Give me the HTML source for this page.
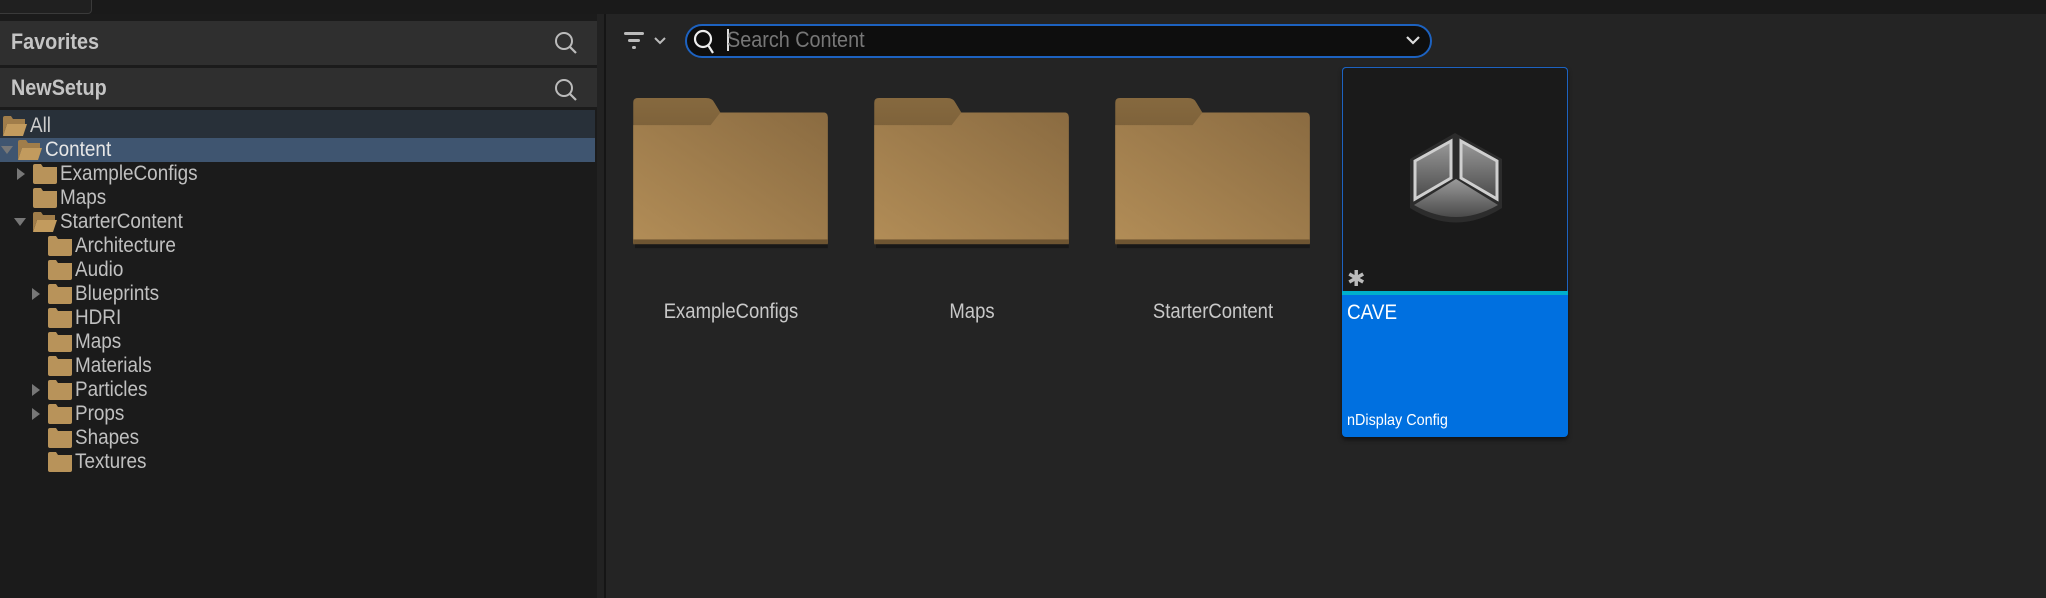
<!DOCTYPE html>
<html><head><meta charset="utf-8"><style>
*{margin:0;padding:0;box-sizing:border-box}
body{width:2046px;height:598px;background:#242424;position:relative;overflow:hidden;font-family:"Liberation Sans",sans-serif;color:#c0c0c0}
.a{position:absolute}
.t{font-size:21px;line-height:24px;white-space:nowrap;transform:scaleX(.9);transform-origin:0 50%}
.arr{position:absolute;width:0;height:0}
.ar{border-top:6px solid transparent;border-bottom:6px solid transparent;border-left:8px solid #777}
.ad{border-left:6px solid transparent;border-right:6px solid transparent;border-top:8px solid #777}
.big{position:absolute;top:98px;width:201px;height:155px}
.lbl{position:absolute;top:300px;width:240px;text-align:center;font-size:21px;color:#c8c8c8;transform:scaleX(.88);transform-origin:50% 50%}
</style></head><body>
<div class="a" style="left:0;top:0;width:2046px;height:14px;background:#1a1a1a"></div>
<div class="a" style="left:-4px;top:-4px;width:96px;height:18px;border:1px solid #3a3a3a;border-radius:4px;background:#202020"></div>
<div class="a" style="left:0;top:14px;width:597px;height:584px;background:#1b1b1b"></div>
<div class="a" style="left:597px;top:14px;width:9px;height:584px;background:#222"></div>
<div class="a" style="left:604px;top:14px;width:2px;height:584px;background:#151515"></div>
<div class="a" style="left:0;top:21px;width:597px;height:44px;background:#2f2f2f"></div>
<div class="a t" style="left:11px;top:30px;font-size:22px;font-weight:bold;color:#c4c4c4">Favorites</div>
<div class="a" style="left:0;top:68px;width:597px;height:39px;background:#2f2f2f"></div>
<div class="a t" style="left:11px;top:76px;font-size:22px;font-weight:bold;color:#c4c4c4">NewSetup</div>
<svg class="a" style="left:553px;top:30px" width="26" height="26" viewBox="0 0 26 26"><circle cx="11" cy="11" r="8" fill="none" stroke="#bbb" stroke-width="2"/><line x1="17" y1="17" x2="23" y2="23" stroke="#bbb" stroke-width="2.2"/></svg>
<svg class="a" style="left:553px;top:77px" width="26" height="26" viewBox="0 0 26 26"><circle cx="11" cy="11" r="8" fill="none" stroke="#bbb" stroke-width="2"/><line x1="17" y1="17" x2="23" y2="23" stroke="#bbb" stroke-width="2.2"/></svg>
<div class="a" style="left:0;top:110px;width:595px;height:28px;background:#283039"></div>
<div class="a" style="left:0;top:138px;width:595px;height:24px;background:#3f5570"></div>

<svg width="0" height="0" style="position:absolute"><defs>
<symbol id="fc" viewBox="0 0 24 20"><path d="M0 2 Q0 0 2 0 L8 0 L10 3 L24 3 L24 18 Q24 20 22 20 L2 20 Q0 20 0 18Z" fill="#b8935a"/></symbol>
<symbol id="fo" viewBox="0 0 24 20"><path d="M0 2 Q0 0 2 0 L8 0 L10 3 L22 3 L22 8 L0 8Z" fill="#a07d4a"/><path d="M0 20 L4 8 L24 8 L20 20Z" fill="#c29b5e"/><path d="M0 6 L0 20 L4 8Z" fill="#a07d4a"/></symbol>
</defs></svg>

<svg class="a" style="left:3px;top:116px" width="24" height="20"><use href="#fo"/></svg>
<div class="a t" style="left:30px;top:114px;color:#ccc">All</div>

<div class="arr ad a" style="left:1px;top:146px"></div>
<svg class="a" style="left:18px;top:140px" width="24" height="20"><use href="#fo"/></svg>
<div class="a t" style="left:45px;top:138px;color:#e6e6e6">Content</div>

<div class="arr ar a" style="left:17px;top:168px"></div>
<svg class="a" style="left:33px;top:164px" width="24" height="20"><use href="#fc"/></svg>
<div class="a t" style="left:60px;top:162px">ExampleConfigs</div>

<svg class="a" style="left:33px;top:188px" width="24" height="20"><use href="#fc"/></svg>
<div class="a t" style="left:60px;top:186px">Maps</div>

<div class="arr ad a" style="left:14px;top:218px"></div>
<svg class="a" style="left:33px;top:212px" width="24" height="20"><use href="#fo"/></svg>
<div class="a t" style="left:60px;top:210px">StarterContent</div>

<svg class="a" style="left:48px;top:236px" width="24" height="20"><use href="#fc"/></svg>
<div class="a t" style="left:75px;top:234px">Architecture</div>
<svg class="a" style="left:48px;top:260px" width="24" height="20"><use href="#fc"/></svg>
<div class="a t" style="left:75px;top:258px">Audio</div>
<div class="arr ar a" style="left:32px;top:288px"></div>
<svg class="a" style="left:48px;top:284px" width="24" height="20"><use href="#fc"/></svg>
<div class="a t" style="left:75px;top:282px">Blueprints</div>
<svg class="a" style="left:48px;top:308px" width="24" height="20"><use href="#fc"/></svg>
<div class="a t" style="left:75px;top:306px">HDRI</div>
<svg class="a" style="left:48px;top:332px" width="24" height="20"><use href="#fc"/></svg>
<div class="a t" style="left:75px;top:330px">Maps</div>
<svg class="a" style="left:48px;top:356px" width="24" height="20"><use href="#fc"/></svg>
<div class="a t" style="left:75px;top:354px">Materials</div>
<div class="arr ar a" style="left:32px;top:384px"></div>
<svg class="a" style="left:48px;top:380px" width="24" height="20"><use href="#fc"/></svg>
<div class="a t" style="left:75px;top:378px">Particles</div>
<div class="arr ar a" style="left:32px;top:408px"></div>
<svg class="a" style="left:48px;top:404px" width="24" height="20"><use href="#fc"/></svg>
<div class="a t" style="left:75px;top:402px">Props</div>
<svg class="a" style="left:48px;top:428px" width="24" height="20"><use href="#fc"/></svg>
<div class="a t" style="left:75px;top:426px">Shapes</div>
<svg class="a" style="left:48px;top:452px" width="24" height="20"><use href="#fc"/></svg>
<div class="a t" style="left:75px;top:450px">Textures</div>

<svg class="a" style="left:622px;top:30px" width="50" height="22" viewBox="0 0 50 22"><rect x="2" y="2" width="20" height="3" rx="1.5" fill="#bbb"/><rect x="6" y="9" width="12" height="3" rx="1.5" fill="#bbb"/><rect x="10" y="16" width="4" height="3" rx="1.5" fill="#bbb"/><path d="M33 8 L38 13 L43 8" fill="none" stroke="#bbb" stroke-width="2"/></svg>
<div class="a" style="left:685px;top:24px;width:747px;height:34px;border:2px solid #1d62c0;border-radius:17px;background:#0e0e0e"></div>
<svg class="a" style="left:692px;top:28px" width="26" height="28" viewBox="0 0 26 28"><circle cx="11" cy="11" r="8" fill="none" stroke="#eee" stroke-width="2.2"/><line x1="16" y1="17" x2="21" y2="25" stroke="#eee" stroke-width="2.2"/></svg>
<div class="a" style="left:727px;top:29px;width:2px;height:22px;background:#ddd"></div>
<div class="a t" style="left:727px;top:28px;font-size:22px;color:#777">Search Content</div>
<svg class="a" style="left:1404px;top:32px" width="18" height="16" viewBox="0 0 18 16"><path d="M3 5 L9 11 L15 5" fill="none" stroke="#ddd" stroke-width="2.2"/></svg>

<svg width="0" height="0" style="position:absolute"><defs>
<linearGradient id="g1" x1="0" y1="1" x2="1" y2="0"><stop offset="0" stop-color="#b28d57"/><stop offset="1" stop-color="#8a6b41"/></linearGradient>
<linearGradient id="gt" x1="0" y1="0" x2="0" y2="1"><stop offset="0" stop-color="#86693f"/><stop offset="1" stop-color="#5e4727"/></linearGradient>
<symbol id="bf" viewBox="0 0 201 160"><path d="M0 5 Q0 0 5 0 L75 0 Q82 0 84 5 L90 15 L196 15 Q201 15 201 20 L201 150 L0 150Z" fill="url(#gt)"/><path d="M0 30 L0 28 L80 28 L90 15 L196 15 Q201 15 201 20 L201 150 L0 150Z" fill="url(#g1)"/><rect x="0" y="146" width="201" height="5" fill="#6e5532"/><rect x="2" y="151" width="199" height="4" fill="#111" opacity=".6"/></symbol>
<linearGradient id="gp" x1="0" y1="0" x2="0" y2="1"><stop offset="0" stop-color="#9a9a9a"/><stop offset="1" stop-color="#4a4a4a"/></linearGradient>
</defs></svg>
<svg class="big" style="left:630px" viewBox="0 0 201 160" width="201" height="160"><use href="#bf"/></svg>
<svg class="big" style="left:871px" viewBox="0 0 201 160" width="201" height="160"><use href="#bf"/></svg>
<svg class="big" style="left:1112px" viewBox="0 0 201 160" width="201" height="160"><use href="#bf"/></svg>
<div class="lbl" style="left:611px">ExampleConfigs</div>
<div class="lbl" style="left:852px">Maps</div>
<div class="lbl" style="left:1093px">StarterContent</div>

<div class="a" style="left:1342px;top:67px;width:226px;height:370px;border-radius:4px;background:#0070e0;box-shadow:0 3px 4px rgba(0,0,0,.5);overflow:hidden">
 <div class="a" style="left:0;top:0;width:226px;height:224px;background:#1a1a1a;border:1px solid #1d62c0;border-bottom:none;border-radius:4px 4px 0 0"></div>
 <div class="a" style="left:0;top:224px;width:226px;height:4px;background:#00b0cc"></div>
 <div class="a t" style="left:5px;top:234px;color:#fff">CAVE</div>
 <div class="a t" style="left:5px;top:342px;font-size:16px;color:#fff">nDisplay Config</div>
 <div class="a" style="left:5px;top:200px;font-size:22px;color:#bbb;line-height:24px">✱</div>
</div>
<svg class="a" style="left:1410px;top:133px" width="92" height="96" viewBox="0 0 92 96">
<path d="M0 26 L45 0 L92 26 L92 75 Q46 104 0 75Z" fill="#2c2c2c"/>
<path d="M4 72 L46 46 L88 72 Q46 96 4 72Z" fill="url(#gp)"/>
<path d="M5 28 L41 8 L41 45 L5 66Z" fill="url(#gp)" stroke="#cfcfcf" stroke-width="3"/>
<path d="M51 8 L87 28 L87 66 L51 45Z" fill="url(#gp)" stroke="#cfcfcf" stroke-width="3"/>
</svg>
</body></html>
